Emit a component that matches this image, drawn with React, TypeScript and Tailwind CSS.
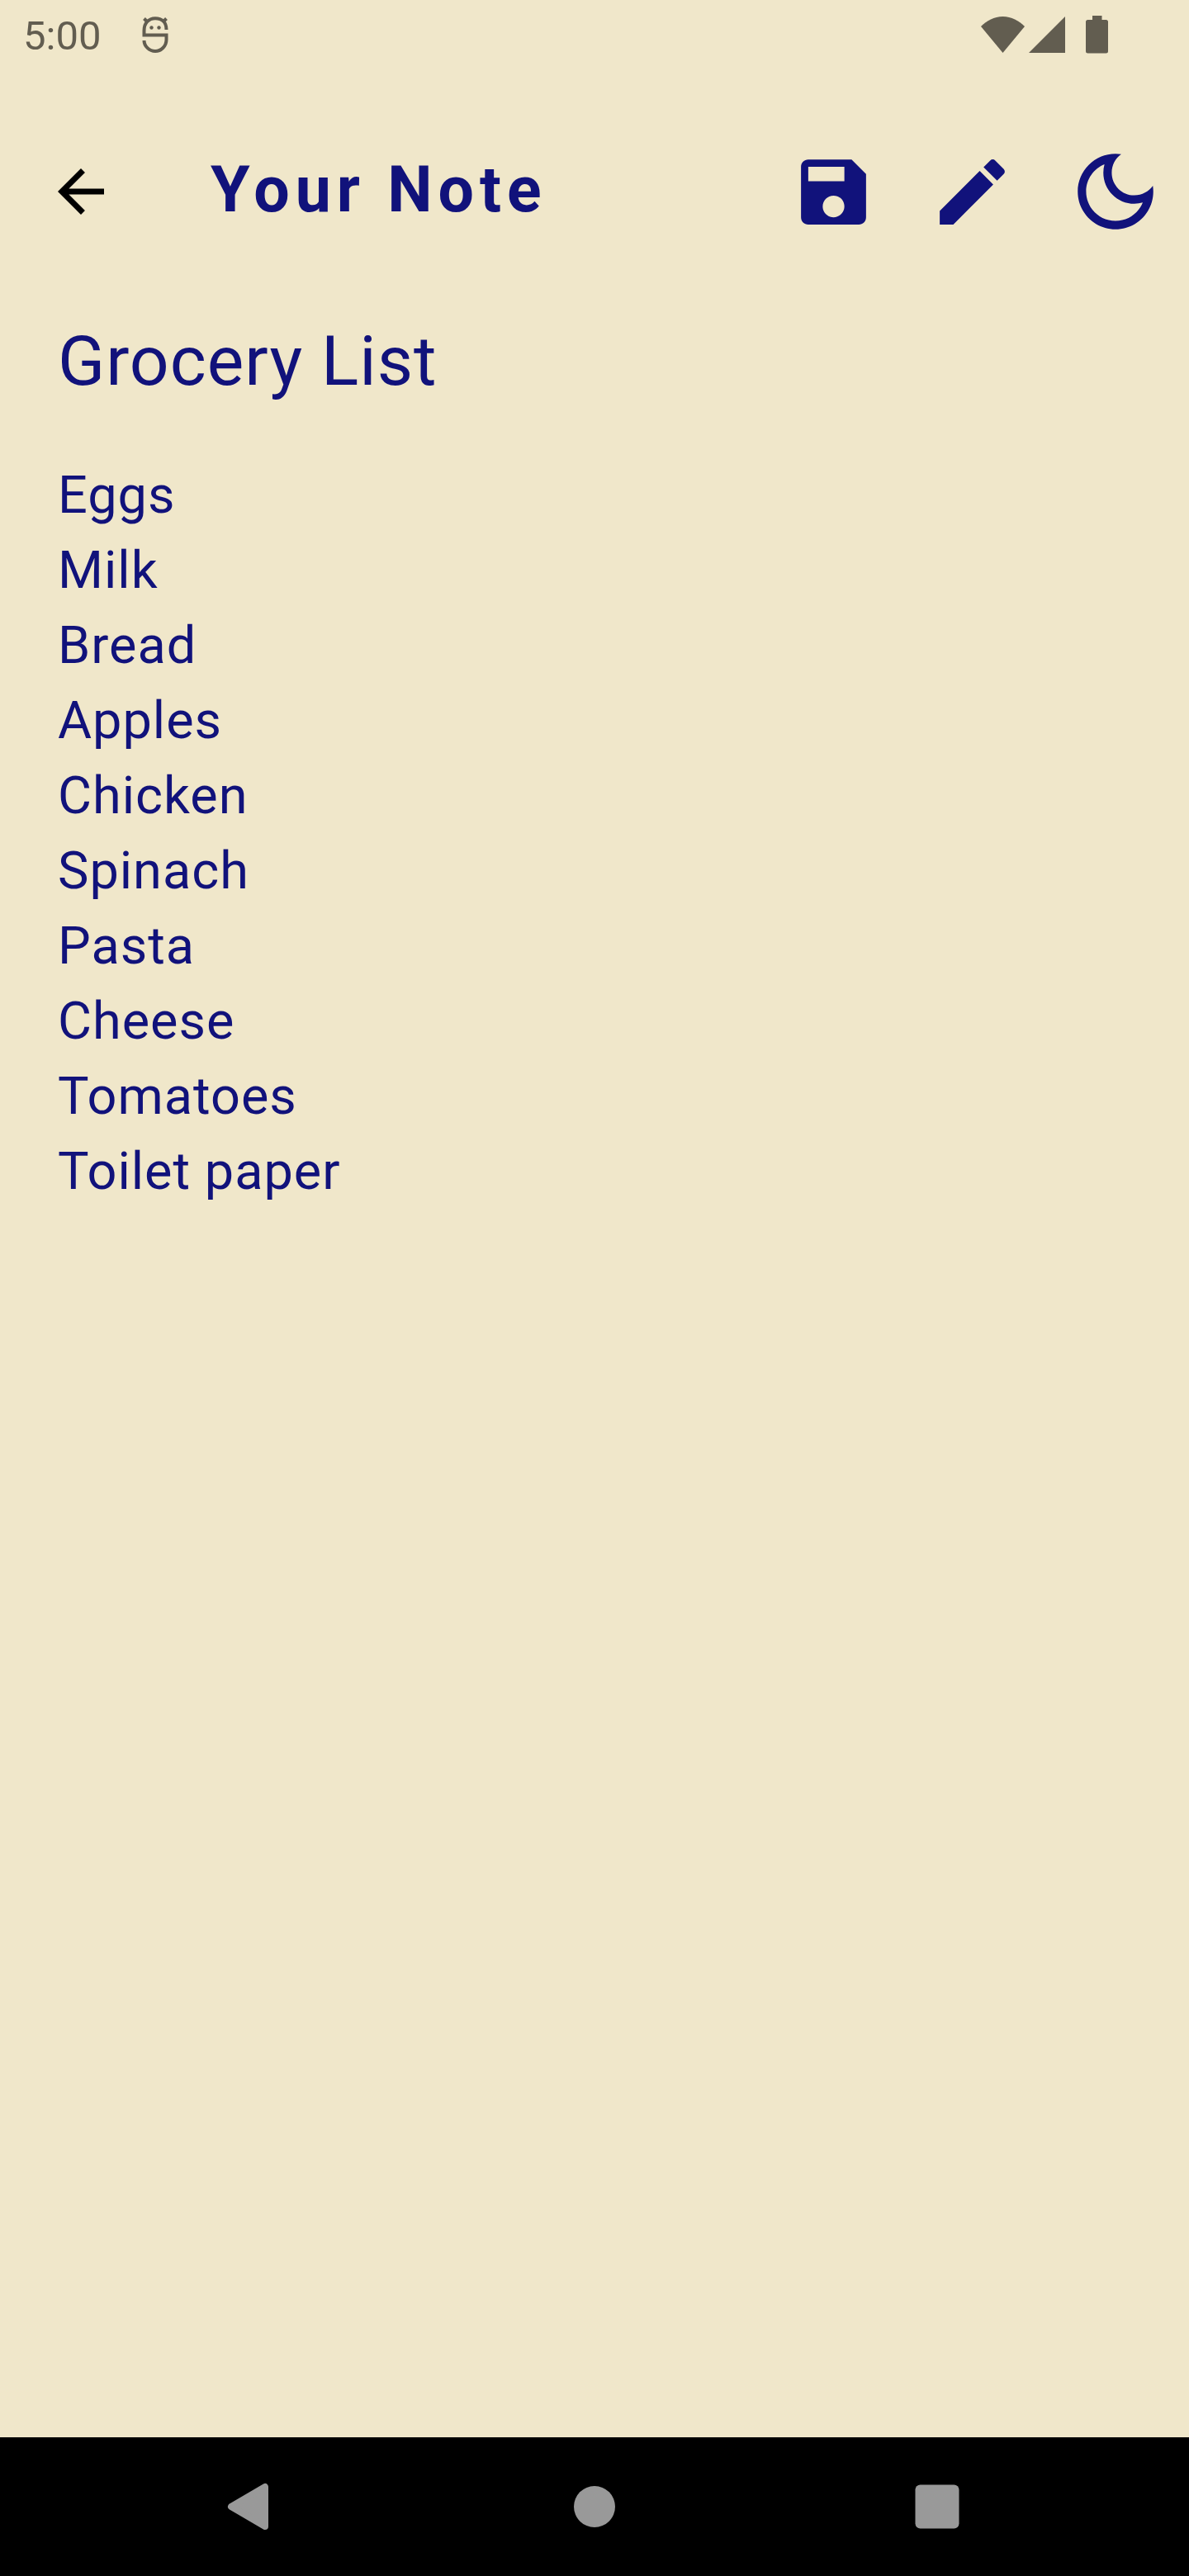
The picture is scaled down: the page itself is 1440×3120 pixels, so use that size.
import React from "react";

const items = [
  "Eggs",
  "Milk",
  "Bread",
  "Apples",
  "Chicken",
  "Spinach",
  "Pasta",
  "Cheese",
  "Tomatoes",
  "Toilet paper",
];

function DebugIcon() {
  return (
    <svg className="h-11 w-8" viewBox="0 0 32 44" fill="none" stroke="currentColor" strokeWidth="4" aria-hidden="true">
      <path d="M29.500 16C29.500 7 24 2.200 16 2.200S2.500 8 2.500 17V22.500H29.500V28C29.500 36 23 42 16 42S2.500 36 2.500 29" />
      <path d="M2.500 2.500L7 7M29.500 2.500L25 7" />
      <circle cx="11.500" cy="13.500" r="2.200" fill="currentColor" stroke="none" />
      <circle cx="20.500" cy="13.500" r="2.200" fill="currentColor" stroke="none" />
    </svg>
  );
}

function StatusBar() {
  return (
    <div className="flex h-[84px] items-center justify-between pl-7 pr-[98px] text-[#625d50]">
      <div className="flex items-center gap-[50px]">
        <span className="pt-1 text-[49px] leading-[56px]">5:00</span>
        <DebugIcon />
      </div>
      <div className="flex items-center">
        <svg className="h-[44px] w-[53px]" viewBox="0 0 53 44" fill="currentColor" aria-hidden="true">
          <path d="M26.500 44L0 12C7 5 16 0 26.500 0S46 5 53 12Z" />
        </svg>
        <svg className="ml-[5px] h-[44px] w-[44px]" viewBox="0 0 44 44" fill="currentColor" aria-hidden="true">
          <path d="M0 44L44 0V44Z" />
        </svg>
        <svg className="ml-[25px] h-[46px] w-[27px]" viewBox="0 0 27 46" fill="currentColor" aria-hidden="true">
          <path d="M8 0H19.500V5H24.500Q27 5 27 7.500V43Q27 45.500 24.500 45.500H2.500Q0 45.500 0 43V7.500Q0 5 2.500 5H8Z" />
        </svg>
      </div>
    </div>
  );
}

function Header() {
  return (
    <header className="flex h-[296px] items-center pl-14 pr-7">
      <button type="button" aria-label="Back" className="text-black">
        <svg className="size-[84px]" viewBox="0 0 24 24" fill="currentColor">
          <path d="M20 11H7.830l5.590-5.590L12 4l-8 8 8 8 1.410-1.410L7.830 13H20v-2z" />
        </svg>
      </button>
      <h1 className="ml-[115px] flex-1 pb-1 text-[77px] leading-[90px] font-bold tracking-[7px]">Your Note</h1>
      <div className="flex items-center gap-[60px]">
        <div className="flex items-center gap-[63px]">
          <button type="button" aria-label="Save note">
            <svg className="size-[105px]" viewBox="0 0 24 24" fill="currentColor">
              <path d="M17 3H5c-1.110 0-2 .9-2 2v14c0 1.100.89 2 2 2h14c1.100 0 2-.9 2-2V7l-4-4zm-5 16c-1.660 0-3-1.340-3-3s1.340-3 3-3 3 1.340 3 3-1.340 3-3 3zm3-10H5V5h10v4z" />
            </svg>
          </button>
          <button type="button" aria-label="Edit note">
            <svg className="size-[105px]" viewBox="0 0 24 24" fill="currentColor">
              <path d="M3 17.250V21h3.750L17.810 9.940l-3.750-3.750L3 17.250zM20.710 7.040c.39-.39.39-1.020 0-1.410l-2.340-2.340c-.39-.39-1.020-.39-1.410 0l-1.830 1.830 3.750 3.750 1.830-1.830z" />
            </svg>
          </button>
        </div>
        <button type="button" aria-label="Dark mode">
          <svg className="size-[122px]" viewBox="0 0 24 24" fill="currentColor">
            <path d="M9.370 5.510C9.190 6.150 9.100 6.820 9.100 7.500c0 4.080 3.320 7.400 7.400 7.400.68 0 1.350-.09 1.990-.27C17.450 17.190 14.930 19 12 19c-3.860 0-7-3.140-7-7 0-2.930 1.810-5.450 4.370-6.490zM12 3c-4.970 0-9 4.030-9 9s4.030 9 9 9 9-4.030 9-9c0-.46-.04-.92-.1-1.360-.98 1.370-2.580 2.260-4.400 2.260-2.980 0-5.400-2.420-5.400-5.400 0-1.810.89-3.420 2.260-4.400C12.920 3.040 12.460 3 12 3z" />
          </svg>
        </button>
      </div>
    </header>
  );
}

function NavigationBar() {
  return (
    <nav aria-label="System" className="flex h-[168px] items-center justify-center gap-[331px] bg-black text-[#999999]">
      <button type="button" aria-label="Back">
        <svg className="size-[84px]" viewBox="0 0 84 84" fill="currentColor" stroke="currentColor" strokeLinejoin="round">
          <path d="M58 18V66L17 42Z" strokeWidth="8" />
        </svg>
      </button>
      <button type="button" aria-label="Home">
        <svg className="size-[84px]" viewBox="0 0 84 84" fill="currentColor">
          <circle cx="42" cy="42" r="25" />
        </svg>
      </button>
      <button type="button" aria-label="Recent apps">
        <svg className="size-[84px]" viewBox="0 0 84 84" fill="currentColor">
          <rect x="15.500" y="15.500" width="53" height="53" rx="6" />
        </svg>
      </button>
    </nav>
  );
}

export default function App() {
  return (
    <div className="flex min-h-screen flex-col bg-[#f0e7ca] font-['Roboto',sans-serif] text-[#11127b]">
      <StatusBar />
      <Header />
      <main className="flex-1 px-[70px]">
        <h2 className="pt-[9px] text-[84px] leading-[98px] tracking-[1px]">Grocery List</h2>
        <ul className="mt-[67px] text-[63px] leading-[91px] tracking-[1px]">
          {items.map((item) => (
            <li key={item}>{item}</li>
          ))}
        </ul>
      </main>
      <NavigationBar />
    </div>
  );
}
